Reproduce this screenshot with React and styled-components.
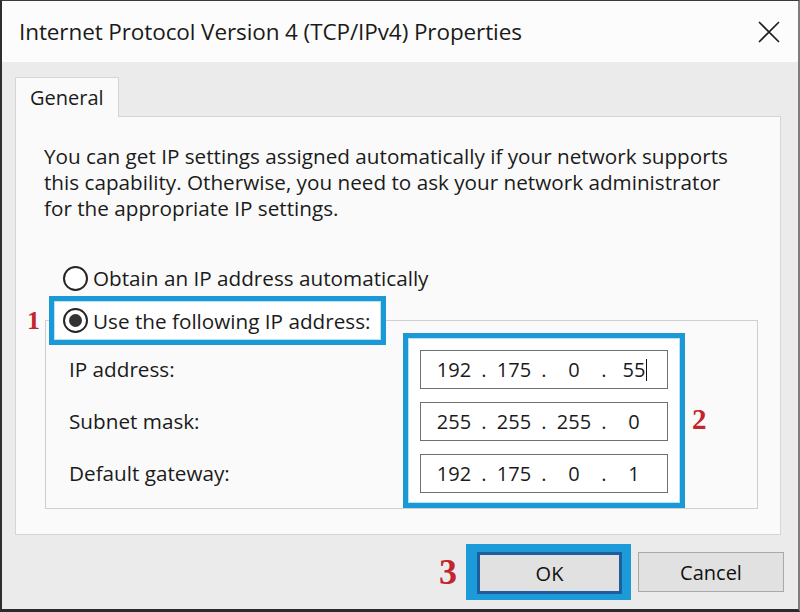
import React from 'react'
import styled, { createGlobalStyle } from 'styled-components'

const GlobalStyle = createGlobalStyle`
  html, body {
    margin: 0;
    padding: 0;
    background: #ffffff;
  }
  body {
    font-family: "Open Sans", "Noto Sans", "Liberation Sans", sans-serif;
    color: #1b1b1b;
  }
  * { box-sizing: border-box; }
`

const Window = styled.div`
  width: 800px;
  height: 612px;
  display: flex;
  flex-direction: column;
  border-top: 1px solid #3a3a3a;
  border-left: 2px solid #2e2e2e;
  border-right: 2px solid #7d7d7d;
  border-bottom: 3px solid #2b2b2b;
  overflow: hidden;
`

const TitleBar = styled.div`
  height: 61px;
  flex: 0 0 auto;
  background: #fcfcfc;
  display: flex;
  align-items: center;
  justify-content: space-between;
  padding: 0 16px 0 17px;
`

const Title = styled.h1`
  margin: 0;
  font-size: 22.5px;
  font-weight: 400;
  color: #1a1a1a;
  letter-spacing: -0.1px;
`

const CloseButton = styled.button`
  width: 26px;
  height: 26px;
  border: none;
  background: transparent;
  padding: 0;
  display: flex;
  align-items: center;
  justify-content: center;
  margin-top: 1px;
`

const Body = styled.div`
  flex: 1;
  background: #ebebeb;
  padding: 15px 14px 0 13px;
  display: flex;
  flex-direction: column;
`

const TabStrip = styled.div`
  display: flex;
`

const Tab = styled.div`
  position: relative;
  z-index: 1;
  width: 104px;
  height: 40px;
  margin-bottom: -1px;
  padding: 6px 0 0 14px;
  font-size: 20px;
  background: #fafafa;
  border: 1px solid #d6d6d6;
  border-bottom: none;
`

const Panel = styled.div`
  height: 419px;
  margin-right: 3px;
  background: #fafafa;
  border: 1px solid #d6d6d6;
  padding: 26px 22px 0 28px;
`

const Intro = styled.p`
  margin: 0;
  font-size: 20.7px;
  line-height: 26px;
  white-space: nowrap;
`

const RadioRow = styled.label`
  display: flex;
  align-items: center;
  gap: 5px;
  height: 30px;
  margin-top: 42px;
  padding-left: 19px;
  font-size: 20.7px;
`

const Radio = styled.span`
  flex: 0 0 auto;
  width: 25px;
  height: 25px;
  border-radius: 50%;
  border: 2px solid #262626;
  background: #fff;
  display: flex;
  align-items: center;
  justify-content: center;

  &::after {
    content: '';
    width: 13px;
    height: 13px;
    border-radius: 50%;
    background: ${({ checked }) => (checked ? '#333333' : 'transparent')};
  }
`

const Group = styled.fieldset`
  margin: 3px 0 0 1px;
  padding: 0 0 0 3px;
  border: 1px solid #cfcfcf;
  min-width: 0;
`

const Legend = styled.legend`
  position: relative;
  display: flex;
  align-items: center;
  gap: 5px;
  height: 49px;
  padding: 0 11px 0 9px;
  font-size: 20.7px;
  white-space: nowrap;
  background: #ffffff;
  border: 5px solid #1b98d5;
  box-shadow: inset 0 0 0 1px #b5e4f6;
`

const Marker = styled.span`
  font-family: "Liberation Serif", "DejaVu Serif", serif;
  font-weight: 700;
  color: #c4252d;
  font-size: ${({ size }) => size}px;
  line-height: 1;
`

const LegendMarker = styled(Marker)`
  position: absolute;
  left: -27px;
  top: 50%;
  transform: translateY(-50%);
`

const SideMarker = styled(Marker)`
  margin-left: 7px;
  margin-bottom: 14px;
`

const GroupRow = styled.div`
  display: flex;
  align-items: center;
`

const LabelCol = styled.div`
  width: 334px;
  margin-left: 20px;
  padding-top: 4px;
  align-self: flex-start;
  display: flex;
  flex-direction: column;
  gap: 13px;
`

const FieldLabel = styled.div`
  height: 39px;
  display: flex;
  align-items: center;
  font-size: 20.7px;
`

const FieldsBox = styled.div`
  margin-top: -12px;
  padding: 12px 12px 10px;
  background: #ffffff;
  border: 5px solid #1b98d5;
  box-shadow: inset 0 0 0 1px #b5e4f6;
  display: flex;
  flex-direction: column;
  gap: 13px;
`

const IpField = styled.div`
  width: 248px;
  height: 39px;
  border: 1.5px solid #707070;
  background: #fff;
  display: flex;
  align-items: center;
  padding-left: 9px;
  font-size: 20px;
`

const Octet = styled.span`
  position: relative;
  width: 48px;
  text-align: center;
`

const Dot = styled.span`
  width: 12px;
  text-align: center;
`

const Caret = styled.span`
  position: absolute;
  top: 3px;
  bottom: 2px;
  right: 11px;
  width: 1.5px;
  background: #111;
`

const ButtonRow = styled.div`
  display: flex;
  justify-content: flex-end;
  align-items: center;
  margin-top: 9px;
`

const FocusBox = styled.div`
  margin-left: 9px;
  padding: 8px 9px 6px 11px;
  background: #1d9bd8;
`

const Button = styled.button`
  width: ${({ w }) => w}px;
  height: ${({ h }) => h}px;
  margin-left: ${({ ml }) => ml || 0}px;
  font-family: inherit;
  font-size: 20px;
  color: #111;
  background: #e1e1e1;
  border: ${({ primary }) => (primary ? '3px solid #1f5d9c' : '1px solid #a9a9a9')};
  padding: 0;
`

const octets = [
  { label: 'IP address:', parts: ['192', '175', '0', '55'], caret: true },
  { label: 'Subnet mask:', parts: ['255', '255', '255', '0'] },
  { label: 'Default gateway:', parts: ['192', '175', '0', '1'] },
]

const IpInput = ({ parts, caret }) => (
  <IpField>
    {parts.map((p, i) => (
      <React.Fragment key={i}>
        {i > 0 && <Dot>.</Dot>}
        <Octet>
          {p}
          {caret && i === 3 && <Caret />}
        </Octet>
      </React.Fragment>
    ))}
  </IpField>
)

const App = () => {
  return (
    <>
      <GlobalStyle />
      <Window>
        <TitleBar>
          <Title>Internet Protocol Version 4 (TCP/IPv4) Properties</Title>
          <CloseButton aria-label="Close">
            <svg width="22" height="22" viewBox="0 0 22 22">
              <path d="M1 1 L21 21 M21 1 L1 21" stroke="#1a1a1a" strokeWidth="1.6" fill="none" />
            </svg>
          </CloseButton>
        </TitleBar>
        <Body>
          <TabStrip>
            <Tab>General</Tab>
          </TabStrip>
          <Panel>
            <Intro>
              You can get IP settings assigned automatically if your network supports
              <br />
              this capability. Otherwise, you need to ask your network administrator
              <br />
              for the appropriate IP settings.
            </Intro>
            <RadioRow>
              <Radio />
              Obtain an IP address automatically
            </RadioRow>
            <Group>
              <Legend>
                <LegendMarker size={26}>1</LegendMarker>
                <Radio checked />
                Use the following IP address:
              </Legend>
              <GroupRow>
                <LabelCol>
                  {octets.map((o) => (
                    <FieldLabel key={o.label}>{o.label}</FieldLabel>
                  ))}
                </LabelCol>
                <FieldsBox>
                  {octets.map((o) => (
                    <IpInput key={o.label} parts={o.parts} caret={o.caret} />
                  ))}
                </FieldsBox>
                <SideMarker size={29}>2</SideMarker>
              </GroupRow>
            </Group>
          </Panel>
          <ButtonRow>
            <Marker size={36}>3</Marker>
            <FocusBox>
              <Button primary w={145} h={42}>OK</Button>
            </FocusBox>
            <Button w={146} h={40} ml={7}>Cancel</Button>
          </ButtonRow>
        </Body>
      </Window>
    </>
  )
}

export default App
